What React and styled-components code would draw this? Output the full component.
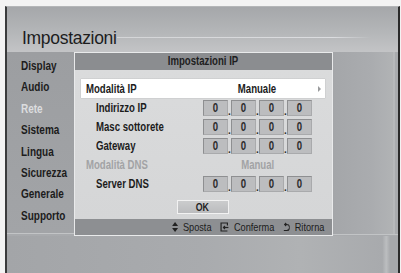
import React from "react"
import styled, { createGlobalStyle } from "styled-components"

const sans = `"Liberation Sans", Arial, sans-serif`

const GlobalStyle = createGlobalStyle`
  html, body {
    margin: 0;
    padding: 0;
    background: #f3f3f3;
  }
  body {
    font-family: ${sans};
  }
`

// condensed look: the TV menu font is a narrow grotesque
const Narrow = styled.span`
  display: inline-block;
  white-space: nowrap;
  transform: scaleX(0.8);
  transform-origin: ${p => p.$origin || "left"} center;
`

const Page = styled.div`
  width: 401px;
  height: 273px;
  overflow: hidden;
  padding: 6px 0 0 5px;
  box-sizing: border-box;
`

const Screen = styled.div`
  width: 395px;
  height: 267px;
  box-sizing: border-box;
  border-left: 2px solid #3a3b3c;
  border-right: 2px solid #2a2a2a;
  border-top: 1px solid #b4b6b8;
  background: #a8aaad;
  display: flex;
  flex-direction: column;
`

const Header = styled.div`
  height: 41px;
  display: flex;
  align-items: flex-end;
  padding: 0 27px 4px 15px;
  background: linear-gradient(to bottom, #a5a7aa 0%, #b4b6b8 55%, #c3c4c6 100%);
`

const Title = styled.h1`
  margin: 0;
  font-weight: 400;
  font-size: 17.5px;
  letter-spacing: -0.3px;
  line-height: 20px;
  color: #1d1d1d;
`

const Rule = styled.div`
  flex: 1;
  height: 1px;
  margin-bottom: 10px;
  background: linear-gradient(to right, #d4d5d7, #dcdde0 85%, rgba(220, 221, 224, 0));
`

const Middle = styled.div`
  display: flex;
  height: 184px;
`

const Sidebar = styled.ul`
  list-style: none;
  margin: 0;
  width: 67px;
  height: 182px;
  padding: 4px 0 0 14px;
  box-sizing: border-box;
  background: linear-gradient(to bottom, #9c9ea1, #a2a4a7);
  border-bottom: 1px solid #c2c4c6;
`

const MenuItem = styled.li`
  height: 21.4px;
  line-height: 21.4px;
  font-size: 12.5px;
  font-weight: 700;
  color: ${p => (p.$active ? "#dcdddf" : "#1c1c1c")};
`

const Dialog = styled.div`
  width: 259px;
  height: 184px;
  box-sizing: border-box;
  border: 1px solid #e9eaeb;
  display: flex;
  flex-direction: column;
  background: #d8d9da;
`

const DialogTitle = styled.div`
  height: 17px;
  line-height: 17px;
  text-align: center;
  font-size: 12px;
  font-weight: 700;
  color: #1e1e1e;
  background: #8b8d90;
`

const DialogBody = styled.div`
  height: 149px;
  box-sizing: border-box;
  padding: 9px 7px 0 6px;
  background: linear-gradient(to bottom, #dadbdc, #d5d6d7);
  display: flex;
  flex-direction: column;
`

const Row = styled.div`
  height: 19px;
  display: grid;
  grid-template-columns: 122px 109px 1fr;
  align-items: center;
  background: ${p => (p.$selected ? "#ffffff" : "transparent")};
  box-shadow: ${p => (p.$selected ? "0 0 1px rgba(0,0,0,0.25)" : "none")};
`

const Label = styled.span`
  padding-left: ${p => (p.$indent ? 15 : 5)}px;
  font-size: 12px;
  font-weight: 700;
  line-height: 14px;
  color: ${p => (p.$muted ? "#a2a3a5" : "#1c1c1c")};
`

const Value = styled.span`
  text-align: center;
  font-size: 12px;
  font-weight: 700;
  line-height: 14px;
  color: ${p => (p.$muted ? "#a2a3a5" : "#1c1c1c")};
`

const Octets = styled.div`
  display: flex;
  align-items: flex-end;
  height: 16px;
`

const Octet = styled.span`
  width: 25px;
  height: 16px;
  box-sizing: border-box;
  border: 1px solid #8e8f91;
  border-right-color: #a9aaac;
  border-bottom-color: #a9aaac;
  background: #bcbdbf;
  text-align: center;
  line-height: 14px;
  font-size: 12px;
  font-weight: 700;
  color: #2c2c2c;
`

const Dot = styled.span`
  width: 3px;
  text-align: center;
  font-size: 10px;
  line-height: 8px;
  font-weight: 700;
  color: #2c2c2c;
`

const Caret = styled.span`
  display: flex;
  justify-content: flex-end;
  padding-right: 4px;
`

const ButtonRow = styled.div`
  display: flex;
  justify-content: center;
  margin-top: 7px;
  padding-right: 1px;
`

const OkButton = styled.button`
  width: 52px;
  height: 14px;
  padding: 0;
  box-sizing: border-box;
  border: 1px solid #f2f2f2;
  background: linear-gradient(to bottom, #cbcccd, #bbbcbe);
  font-family: ${sans};
  font-size: 11px;
  font-weight: 700;
  line-height: 12px;
  color: #1e1e1e;
`

const Footer = styled.div`
  height: 16px;
  display: flex;
  justify-content: flex-end;
  align-items: center;
  padding-right: 8px;
  background: #8d8f92;
`

const Hints = styled.div`
  display: flex;
  align-items: center;
  gap: 11px;
  transform: scaleX(0.8);
  transform-origin: right center;
`

const Hint = styled.span`
  display: flex;
  align-items: center;
  gap: 6px;
  font-size: 11.5px;
  line-height: 14px;
  color: #1c1c1c;
  svg {
    display: block;
  }
`

const Filler = styled.div`
  flex: 1;
  height: 182px;
  border-bottom: 1px solid #c2c4c6;
  background: linear-gradient(to right, #a4a6a9, #aaacaf 60%, #b1b3b5 92%, #bdbfc1 94%, #a9abae 96%);
`

const Bottom = styled.div`
  flex: 1;
  background: linear-gradient(to right, #a3a5a8 0%, #a9abae 50%, #b0b2b4 75%, #a8aaad 96%, #bcbec0 97%, #a6a8ab 98%);
`

// footer icons are drawn 1.25x wide because the hint strip is squeezed to 0.8
const MoveIcon = () => (
  <svg width="7.5" height="10" viewBox="0 0 6 10" preserveAspectRatio="none">
    <polygon points="3,0 6,4 0,4" fill="#222" />
    <polygon points="0,6 6,6 3,10" fill="#222" />
  </svg>
)

const EnterIcon = () => (
  <svg width="11" height="10" viewBox="0 0 9 10" preserveAspectRatio="none" fill="none" stroke="#222" strokeWidth="1.2">
    <path d="M7.5 3.5V1H1v8h6.5" />
    <path d="M3.5 5.5H8.5" />
    <path d="M5 4L3.5 5.5 5 7" />
  </svg>
)

const ReturnIcon = () => (
  <svg width="8.5" height="10" viewBox="0 0 7 10" preserveAspectRatio="none" fill="none" stroke="#222" strokeWidth="1.2">
    <path d="M1.5 2.5h2a3 3 0 0 1 0 6H0.5" />
    <path d="M3 1L1.5 2.5 3 4" />
  </svg>
)

const CaretIcon = () => (
  <svg width="3" height="6" viewBox="0 0 3 6">
    <polygon points="0,0 3,3 0,6" fill="#9a9b9d" />
  </svg>
)

const IpField = () => (
  <Octets>
    {[0, 1, 2, 3].map(i => (
      <React.Fragment key={i}>
        {i > 0 && <Dot>.</Dot>}
        <Octet>
          <Narrow $origin="center">0</Narrow>
        </Octet>
      </React.Fragment>
    ))}
  </Octets>
)

const menu = ["Display", "Audio", "Rete", "Sistema", "Lingua", "Sicurezza", "Generale", "Supporto"]

const App = () => (
  <Page>
    <GlobalStyle />
    <Screen>
      <Header>
        <Title>Impostazioni</Title>
        <Rule />
      </Header>
      <Middle>
        <Sidebar>
          {menu.map(item => (
            <MenuItem key={item} $active={item === "Rete"}>
              <Narrow>{item}</Narrow>
            </MenuItem>
          ))}
        </Sidebar>
        <Dialog>
          <DialogTitle>
            <Narrow $origin="center">Impostazioni IP</Narrow>
          </DialogTitle>
          <DialogBody>
            <Row $selected>
              <Label>
                <Narrow>Modalità IP</Narrow>
              </Label>
              <Value>
                <Narrow $origin="center">Manuale</Narrow>
              </Value>
              <Caret>
                <CaretIcon />
              </Caret>
            </Row>
            <Row>
              <Label $indent>
                <Narrow>Indirizzo IP</Narrow>
              </Label>
              <IpField />
            </Row>
            <Row>
              <Label $indent>
                <Narrow>Masc sottorete</Narrow>
              </Label>
              <IpField />
            </Row>
            <Row>
              <Label $indent>
                <Narrow>Gateway</Narrow>
              </Label>
              <IpField />
            </Row>
            <Row>
              <Label $muted>
                <Narrow>Modalità DNS</Narrow>
              </Label>
              <Value $muted>
                <Narrow $origin="center">Manual</Narrow>
              </Value>
            </Row>
            <Row>
              <Label $indent>
                <Narrow>Server DNS</Narrow>
              </Label>
              <IpField />
            </Row>
            <ButtonRow>
              <OkButton>
                <Narrow $origin="center">OK</Narrow>
              </OkButton>
            </ButtonRow>
          </DialogBody>
          <Footer>
            <Hints>
              <Hint>
                <MoveIcon />
                Sposta
              </Hint>
              <Hint>
                <EnterIcon />
                Conferma
              </Hint>
              <Hint>
                <ReturnIcon />
                Ritorna
              </Hint>
            </Hints>
          </Footer>
        </Dialog>
        <Filler />
      </Middle>
      <Bottom />
    </Screen>
  </Page>
)

export default App
